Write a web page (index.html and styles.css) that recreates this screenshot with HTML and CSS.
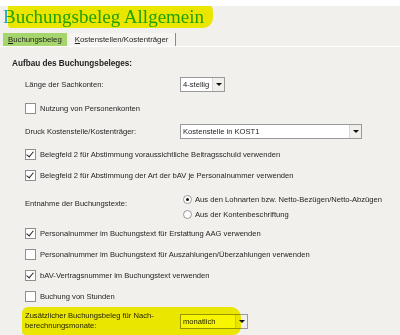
FILE: index.html
```html
<!DOCTYPE html>
<html lang="de">
<head>
  <meta charset="UTF-8" />
  <title>Buchungsbeleg Allgemein</title>
  <link rel="stylesheet" href="styles.css">
</head>
<body>

<div class="page">
  <div class="title-wrap">
    <h1>Buchungsbeleg Allgemein</h1>
    <span class="marker marker-title"></span>
  </div>

  <div class="tabs">
    <div class="tab active"><u>B</u>uchungsbeleg</div>
    <div class="tab"><u>K</u>ostenstellen/Kostenträger</div>
  </div>

  <div class="content">
    <div class="heading">Aufbau des Buchungsbeleges:</div>

    <div class="row">
      <span class="label">Länge der Sachkonten:</span>
      <div class="select" style="width: 45px">
        <span class="value">4-stellig</span>
        <span class="arrow"></span>
      </div>
    </div>

    <div class="row wide">
      <span class="check"></span>
      <span>Nutzung von Personenkonten</span>
    </div>

    <div class="row mid">
      <span class="label">Druck Kostenstelle/Kostenträger:</span>
      <div class="select" style="width: 182px">
        <span class="value">Kostenstelle in KOST1</span>
        <span class="arrow"></span>
      </div>
    </div>

    <div class="row mid">
      <span class="check on"></span>
      <span>Belegfeld 2 für Abstimmung voraussichtliche Beitragsschuld verwenden</span>
    </div>

    <div class="row">
      <span class="check on"></span>
      <span>Belegfeld 2 für Abstimmung der Art der bAV je Personalnummer verwenden</span>
    </div>

    <div class="row radios">
      <span class="label">Entnahme der Buchungstexte:</span>
      <div class="radio-list">
        <div class="radio-item"><span class="radio on"></span>Aus den Lohnarten bzw. Netto-Bezügen/Netto-Abzügen</div>
        <div class="radio-item"><span class="radio"></span>Aus der Kontenbeschriftung</div>
      </div>
    </div>

    <div class="row">
      <span class="check on"></span>
      <span>Personalnummer im Buchungstext für Erstattung AAG verwenden</span>
    </div>

    <div class="row">
      <span class="check"></span>
      <span>Personalnummer im Buchungstext für Auszahlungen/Überzahlungen verwenden</span>
    </div>

    <div class="row">
      <span class="check on"></span>
      <span>bAV-Vertragsnummer im Buchungstext verwenden</span>
    </div>

    <div class="row">
      <span class="check"></span>
      <span>Buchung von Stunden</span>
    </div>

    <div class="row last">
      <span class="label">Zusätzlicher Buchungsbeleg für Nach-<br>berechnungsmonate:</span>
      <div class="select" style="width: 68px">
        <span class="value">monatlich</span>
        <span class="arrow"></span>
      </div>
      <span class="marker marker-bottom"></span>
    </div>
  </div>
</div>

</body>
</html>
```

FILE: styles.css
```css
body {
  margin: 0;
  background: #fff;
  font-family: "Liberation Sans", Arial, sans-serif;
  font-size: 7.6px;
  color: #1e1e1e;
}

.page {
  margin-top: 6px;
  background: #f1f0ec;
  height: 329px;
  overflow: hidden;
}

.title-wrap {
  position: relative;
  height: 27px;
}

h1 {
  margin: 0;
  padding: 0 0 0 3px;
  font-family: "Liberation Serif", "Times New Roman", serif;
  font-size: 19px;
  font-weight: normal;
  line-height: 22px;
  color: #25a7b8;
}

.marker {
  position: absolute;
  background: #f8f500;
  mix-blend-mode: multiply;
}

.marker-title {
  left: 8px;
  top: -6px;
  width: 205px;
  height: 28px;
  border-radius: 4px 12px 10px 3px;
}

.tabs {
  display: flex;
  gap: 2px;
  padding-left: 3px;
  height: 13px;
  border-bottom: 1px solid #fff;
  font-size: 7.8px;
}

.tab {
  padding: 0 7px 0 6px;
  line-height: 13px;
  white-space: nowrap;
  background: #f6f5f2;
  border-right: 1px solid #8a8a8a;
}

.tab.active {
  background: #a7d56d;
  padding: 0 5px;
  border-right: none;
}

.content {
  padding: 10px 0 0 25px;
}

.heading {
  margin-left: -13px;
  font-weight: bold;
  font-size: 8.2px;
  height: 13px;
  line-height: 13px;
}

.row {
  display: flex;
  align-items: center;
  margin-top: 6px;
  height: 16px;
  position: relative;
}

.row + .row {
  margin-top: 5px;
}

.row + .row.wide {
  margin-top: 8px;
}

.row + .row.mid {
  margin-top: 7px;
}

.label {
  width: 155px;
  flex: none;
}

.select {
  display: flex;
  height: 15px;
  background: #fff;
  border: 1px solid #9a9a9a;
  box-sizing: border-box;
}

.select .value {
  flex: 1;
  padding-left: 2px;
  line-height: 13px;
  white-space: nowrap;
  overflow: hidden;
}

.select .arrow {
  width: 11px;
  flex: none;
  background: #f0efeb;
  border-left: 1px solid #d6d6d6;
  position: relative;
}

.select .arrow::after {
  content: "";
  position: absolute;
  left: 3px;
  top: 5px;
  border-left: 3px solid transparent;
  border-right: 3px solid transparent;
  border-top: 3px solid #111;
}

.check {
  width: 9px;
  height: 9px;
  flex: none;
  margin-right: 4px;
  background: #fff;
  border: 1px solid #8e8e8e;
  position: relative;
}

.check.on::after {
  content: "";
  position: absolute;
  left: 2px;
  top: 0;
  width: 3px;
  height: 6px;
  border-right: 1px solid #222;
  border-bottom: 1px solid #222;
  transform: rotate(40deg);
}

.row + .row.radios {
  height: 27px;
  margin-top: 10px;
  align-items: flex-start;
}

.row.radios .label {
  padding-top: 6px;
}

.radio-list {
  margin-left: 3px;
}

.radio-item {
  display: flex;
  align-items: center;
  height: 12px;
  margin-bottom: 3px;
}

.radio {
  width: 7px;
  height: 7px;
  flex: none;
  margin-right: 3px;
  border: 1px solid #999;
  border-radius: 50%;
  background: #fff;
  position: relative;
}

.radio.on::after {
  content: "";
  position: absolute;
  left: 2px;
  top: 2px;
  width: 3px;
  height: 3px;
  border-radius: 50%;
  background: #111;
}

.row + .row.last {
  height: 22px;
  margin-top: 6px;
}

.row.last .label {
  line-height: 10px;
}

.marker-bottom {
  left: -3px;
  top: -3px;
  width: 219px;
  height: 28px;
  border-radius: 6px 10px 8px 4px;
}
```
